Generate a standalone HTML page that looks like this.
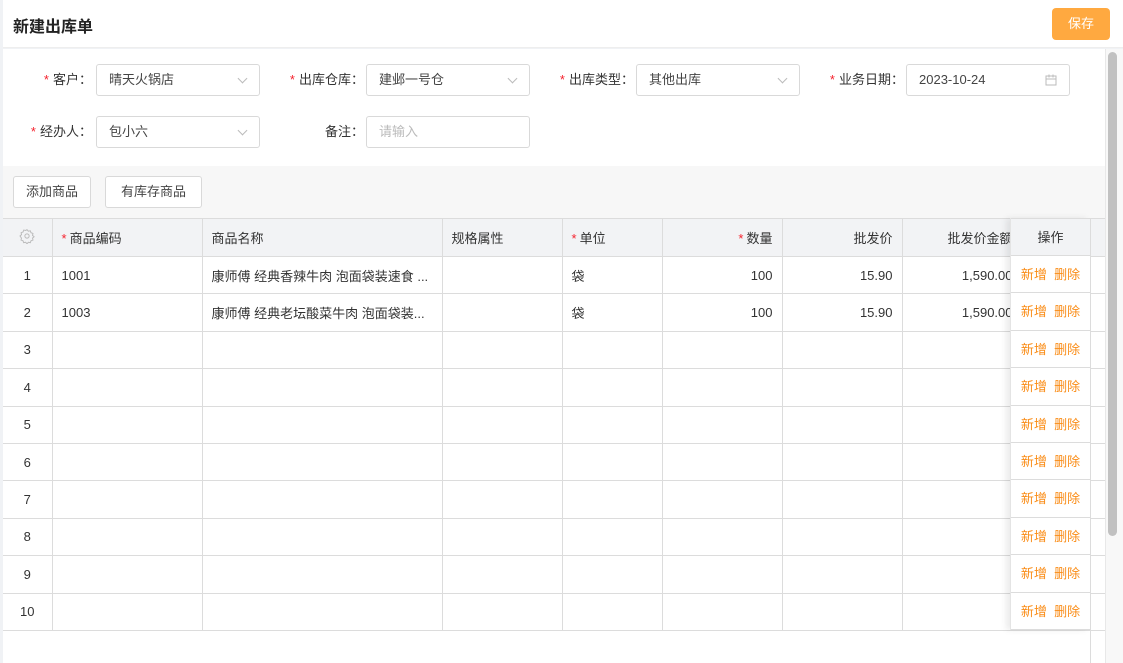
<!DOCTYPE html>
<html><head><meta charset="utf-8">
<style>
*{box-sizing:border-box;margin:0;padding:0}
body{width:1123px;height:663px;overflow:hidden;background:#f0f2f5;font-family:"Liberation Sans","Noto Sans CJK SC",sans-serif;font-size:13px;color:#333;position:relative}
.abs{position:absolute}
.hdr{left:3px;top:0;width:1120px;height:48px;background:#fff;border-bottom:1px solid #eee}
.title{left:13px;top:13px;font-size:16px;font-weight:bold;color:#222}
.save{left:1052px;top:8px;width:58px;height:32px;background:#ffa940;border-radius:4px;color:#fff;font-size:13px;text-align:center;line-height:32px}
.main{left:3px;top:49px;width:1102px;height:614px;background:#fff}
.lbl{font-size:13px;color:#333;text-align:right;line-height:32px;height:32px}
.lbl b{color:#f5222d;font-weight:normal;margin-right:4px}
.inp{height:32px;border:1px solid #d9d9d9;border-radius:3px;background:#fff;line-height:30px;padding-left:12px;color:#444}
.arr{position:absolute;right:13px;top:10px;width:7px;height:7px;border-right:1px solid #bbb;border-bottom:1px solid #bbb;transform:rotate(45deg)}
.tb{left:3px;top:166px;width:1102px;height:52px;background:#f7f7f7}
.btn{top:176px;height:32px;border:1px solid #d9d9d9;border-radius:3px;background:#fff;line-height:30px;text-align:center;color:#444}
table{position:absolute;left:3px;top:218px;border-collapse:collapse;table-layout:fixed;width:1102px}
td,th{border:1px solid #dcdcdc;height:37.4px;padding:0 9px;white-space:nowrap;overflow:hidden;font-weight:normal;font-size:13px;color:#333;text-align:left}
tr td:first-child,tr th:first-child{border-left:none}
th{background:#f2f3f5;height:38px}
th b{color:#f5222d;font-weight:normal;margin-right:3px}
.c{text-align:center}.r{text-align:right}
.op{position:absolute;left:1010px;width:80px;background:#fff;box-shadow:-4px 0 6px rgba(0,0,0,.08);border-left:1px solid #e4e4e4}
.op div{height:37.4px;border-bottom:1px solid #dcdcdc;line-height:37px;text-align:center;color:#fa8c16;font-size:13px}
.sb{left:1105px;top:49px;width:18px;height:614px;background:#f8f8f8;border-left:1px solid #e8e8e8}
.th{left:1108px;top:52px;width:9px;height:484px;background:#c1c1c1;border-radius:5px}
</style></head><body>
<div class="abs hdr"></div>
<div class="abs title">新建出库单</div>
<div class="abs save">保存</div>
<div class="abs main"></div>

<div class="abs lbl" style="left:20px;top:64px;width:72px"><b>*</b>客户：</div>
<div class="abs inp" style="left:96px;top:64px;width:164px">晴天火锅店<span class="arr"></span></div>
<div class="abs lbl" style="left:270px;top:64px;width:94px"><b>*</b>出库仓库：</div>
<div class="abs inp" style="left:366px;top:64px;width:164px">建邺一号仓<span class="arr"></span></div>
<div class="abs lbl" style="left:540px;top:64px;width:94px"><b>*</b>出库类型：</div>
<div class="abs inp" style="left:636px;top:64px;width:164px">其他出库<span class="arr"></span></div>
<div class="abs lbl" style="left:810px;top:64px;width:94px"><b>*</b>业务日期：</div>
<div class="abs inp" style="left:906px;top:64px;width:164px">2023-10-24<svg style="position:absolute;right:12px;top:9px" width="12" height="12" viewBox="0 0 12 12" fill="none" stroke="#bbb"><rect x="1" y="2" width="10" height="9"/><path d="M1 5h10M4 0.5v3M8 0.5v3"/></svg></div>
<div class="abs lbl" style="left:20px;top:116px;width:72px"><b>*</b>经办人：</div>
<div class="abs inp" style="left:96px;top:116px;width:164px">包小六<span class="arr"></span></div>
<div class="abs lbl" style="left:270px;top:116px;width:94px">备注：</div>
<div class="abs inp" style="left:366px;top:116px;width:164px;color:#bbb">请输入</div>

<div class="abs tb"></div>
<div class="abs btn" style="left:13px;width:78px">添加商品</div>
<div class="abs btn" style="left:105px;width:97px">有库存商品</div>

<table>
<colgroup><col style="width:49px"><col style="width:150px"><col style="width:240px"><col style="width:120px"><col style="width:100px"><col style="width:120px"><col style="width:120px"><col style="width:120px"><col style="width:83px"></colgroup>
<tr><th class="c"><svg width="16" height="16" viewBox="0 0 24 24" fill="none" stroke="#bbb" stroke-width="1.5"><circle cx="12" cy="12" r="3.2"/><path d="M12 2.5l2 2.3 3-.6 1 2.9 2.9 1-.6 3 2.3 2-2.3 2 .6 3-2.9 1-1 2.9-3-.6-2 2.3-2-2.3-3 .6-1-2.9-2.9-1 .6-3L1.5 12l2.3-2-.6-3 2.9-1 1-2.9 3 .6z"/></svg></th><th><b>*</b>商品编码</th><th>商品名称</th><th>规格属性</th><th><b>*</b>单位</th><th class="r"><b>*</b>数量</th><th class="r">批发价</th><th class="r">批发价金额</th><th></th></tr>
<tr><td class="c">1</td><td>1001</td><td>康师傅 经典香辣牛肉 泡面袋装速食 ...</td><td></td><td>袋</td><td class="r">100</td><td class="r">15.90</td><td class="r">1,590.00</td><td></td></tr>
<tr><td class="c">2</td><td>1003</td><td>康师傅 经典老坛酸菜牛肉 泡面袋装...</td><td></td><td>袋</td><td class="r">100</td><td class="r">15.90</td><td class="r">1,590.00</td><td></td></tr>
<tr><td class="c">3</td><td></td><td></td><td></td><td></td><td></td><td></td><td></td><td></td></tr>
<tr><td class="c">4</td><td></td><td></td><td></td><td></td><td></td><td></td><td></td><td></td></tr>
<tr><td class="c">5</td><td></td><td></td><td></td><td></td><td></td><td></td><td></td><td></td></tr>
<tr><td class="c">6</td><td></td><td></td><td></td><td></td><td></td><td></td><td></td><td></td></tr>
<tr><td class="c">7</td><td></td><td></td><td></td><td></td><td></td><td></td><td></td><td></td></tr>
<tr><td class="c">8</td><td></td><td></td><td></td><td></td><td></td><td></td><td></td><td></td></tr>
<tr><td class="c">9</td><td></td><td></td><td></td><td></td><td></td><td></td><td></td><td></td></tr>
<tr><td class="c">10</td><td></td><td></td><td></td><td></td><td></td><td></td><td></td><td></td></tr>
</table>
<div class="op" style="top:218px">
<div style="background:#f2f3f5;height:38px;color:#333;border-top:1px solid #dcdcdc">操作</div>
<div>新增&nbsp;&nbsp;删除</div><div>新增&nbsp;&nbsp;删除</div><div>新增&nbsp;&nbsp;删除</div><div>新增&nbsp;&nbsp;删除</div><div>新增&nbsp;&nbsp;删除</div><div>新增&nbsp;&nbsp;删除</div><div>新增&nbsp;&nbsp;删除</div><div>新增&nbsp;&nbsp;删除</div><div>新增&nbsp;&nbsp;删除</div><div>新增&nbsp;&nbsp;删除</div>
</div>
<div class="abs" style="left:1090px;top:218px;width:1px;height:445px;background:#dcdcdc"></div>
<div class="abs sb"></div>
<div class="abs th"></div>
</body></html>
